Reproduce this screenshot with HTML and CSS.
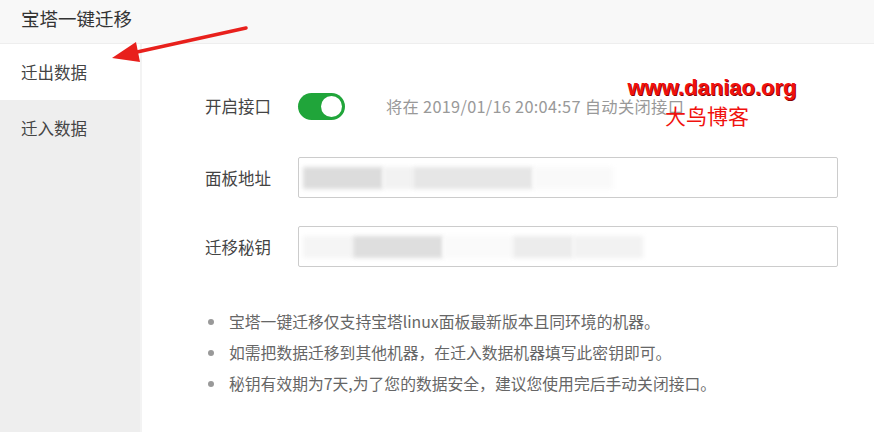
FILE: index.html
```html
<!DOCTYPE html>
<html lang="zh-CN">
<head>
<meta charset="utf-8">
<title>宝塔一键迁移</title>
<link rel="stylesheet" href="styles.css">
</head>
<body>
<div class="app">
  <header class="title-bar">宝塔一键迁移</header>
  <div class="body-row">
    <nav class="side">
      <div class="side-item active">迁出数据</div>
      <div class="side-item">迁入数据</div>
    </nav>
    <main class="main">
      <div class="row row-switch">
        <span class="label">开启接口</span>
        <span class="switch"><span class="knob"></span></span>
        <span class="hint">将在 2019/01/16 20:04:57 自动关闭接口</span>
      </div>
      <div class="row row-input first">
        <span class="label">面板地址</span>
        <div class="input">
          <span class="blur b1"></span><span class="blur b2"></span><span class="blur b3"></span><span class="blur b4"></span>
        </div>
      </div>
      <div class="row row-input">
        <span class="label">迁移秘钥</span>
        <div class="input">
          <span class="blur c1"></span><span class="blur c2"></span><span class="blur c3"></span><span class="blur c4"></span><span class="blur c5"></span>
        </div>
      </div>
      <ul class="notes">
        <li>宝塔一键迁移仅支持宝塔linux面板最新版本且同环境的机器。</li>
        <li>如需把数据迁移到其他机器，在迁入数据机器填写此密钥即可。</li>
        <li>秘钥有效期为7天,为了您的数据安全，建议您使用完后手动关闭接口。</li>
      </ul>
    </main>
  </div>
  <div class="watermark">
    <div class="wm-url">www.daniao.org</div>
    <div class="wm-name">大鸟博客</div>
  </div>
  <svg class="arrow" width="874" height="432" viewBox="0 0 874 432">
    <line x1="246" y1="28" x2="128" y2="54" stroke="#e8201c" stroke-width="3.5" stroke-linecap="round"/>
    <polygon points="112,58 136,42 140,62" fill="#e8201c"/>
  </svg>
</div>
</body>
</html>
```
FILE: styles.css
```css
* { box-sizing: border-box; }
html, body { margin: 0; padding: 0; }
body {
  width: 874px;
  height: 432px;
  overflow: hidden;
  font-family: "Noto Sans CJK SC", "Microsoft YaHei", sans-serif;
  color: #555;
  background: #fff;
}
.app { position: relative; width: 874px; height: 432px; display: flex; flex-direction: column; }
.title-bar {
  height: 44px;
  flex: none;
  background: #f8f8f8;
  border-bottom: 1px solid #eeeeee;
  padding-left: 21px;
  font-size: 18.5px;
  line-height: 36px;
  color: #333;
}
.body-row { flex: 1; display: flex; }
.side {
  width: 142px;
  flex: none;
  background: #eeeeee;
  border-right: 2px solid #f3f3f3;
}
.side-item {
  height: 56px;
  line-height: 56px;
  padding-left: 21px;
  font-size: 16.5px;
  color: #444;
}
.side-item.active { background: #fff; }
.main { flex: 1; padding: 48px 0 0 63px; }
.row { display: flex; align-items: center; }
.label { width: 93px; flex: none; font-size: 16.5px; color: #444; }
.row-switch { height: 28px; }
.switch {
  width: 47px; height: 27px; border-radius: 14px;
  background: #20a53a;
  display: flex; align-items: center; justify-content: flex-end;
  padding-right: 3px;
}
.knob { width: 21px; height: 21px; border-radius: 50%; background: #fff; }
.hint { margin-left: 41px; font-size: 16.3px; letter-spacing: 0.3px; color: #999; }
.row-input { margin-top: 28px; }
.row-input.first { margin-top: 37px; }
.input {
  width: 540px; height: 41px;
  border: 1px solid #cccccc; border-radius: 2px;
  display: flex; align-items: center;
  padding-left: 4px;
  overflow: hidden;
}
.blur { display: block; height: 22px; filter: blur(2px); }
.b1 { width: 80px; background: #dcdcdc; }
.b2 { width: 30px; background: #f2f2f2; }
.b3 { width: 120px; background: #e6e6e6; }
.b4 { width: 80px; background: #f9f9f9; }
.c1 { width: 50px; background: #f5f5f5; }
.c2 { width: 90px; background: #dedede; }
.c3 { width: 70px; background: #fafafa; }
.c4 { width: 60px; background: #ececec; }
.c5 { width: 70px; background: #f2f2f2; }
.notes {
  margin: 39px 0 0 0;
  padding-left: 24px;
  font-size: 15.8px;
  line-height: 31px;
  color: #666;
  list-style: none;
}
.notes li { position: relative; }
.notes li::before {
  content: "";
  position: absolute;
  left: -21px; top: 13px;
  width: 6px; height: 6px; border-radius: 50%;
  background: #999;
}
.watermark {
  position: absolute;
  left: 622px; top: 74px;
  color: #f0110e;
  text-align: center;
  width: 180px;
}
.wm-url {
  font-family: "Liberation Sans", Arial, sans-serif;
  font-weight: bold;
  font-size: 22px;
  line-height: 28px;
  text-shadow: 1px 1px 0 #8a0000;
}
.wm-name {
  font-family: "Noto Sans CJK SC", serif;
  font-size: 21px;
  line-height: 26px;
  margin-right: 10px;
}
.arrow { position: absolute; left: 0; top: 0; pointer-events: none; }
```
